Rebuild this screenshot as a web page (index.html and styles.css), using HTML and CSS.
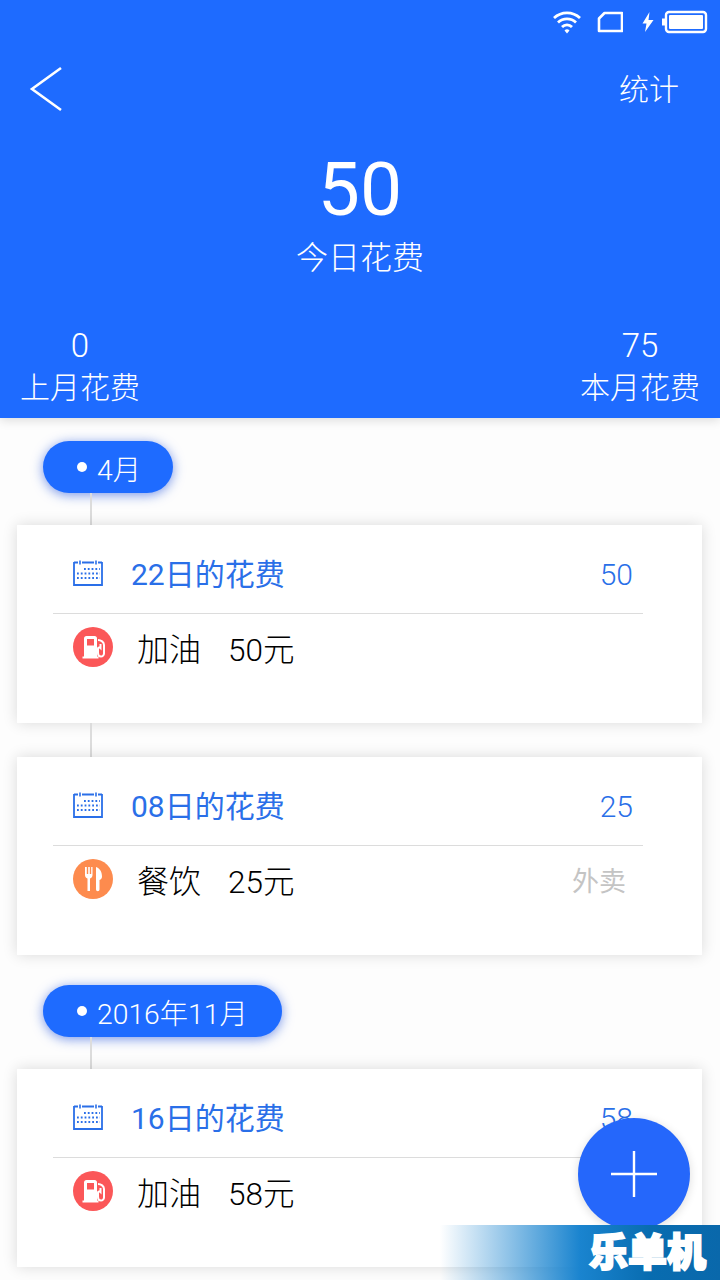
FILE: index.html
```html
<!DOCTYPE html>
<html lang="zh-CN">
  <head>
    <meta charset="UTF-8" />
    <meta name="viewport" content="width=device-width, initial-scale=1.0" />
    <title>今日花费</title>
    <link rel="stylesheet" href="styles.css">
  </head>
  <body>
    <svg class="defs" width="0" height="0">
      <defs>
        <symbol id="calendar" viewBox="0 0 30 26">
          <path d="M1 2.500h4M9 2.500h12M25 2.500h4M1 2v23h28V2" fill="none" stroke="currentColor" stroke-width="1.800" />
          <path d="M7 0.500v4M23 0.500v4" stroke="currentColor" stroke-width="1.600" />
          <path d="M11 9h16M4 13.500h23M4 18h23" stroke="currentColor" stroke-width="1.800" stroke-dasharray="1.800 2" />
        </symbol>
        <symbol id="fuel" viewBox="0 0 40 40">
          <circle cx="20" cy="20" r="20" fill="#fb5758" />
          <path d="M11 30V11.500A2.500 2.500 0 0 1 13.500 9h8A2.500 2.500 0 0 1 24 11.500V30z" fill="#fff" />
          <path d="M14 12h7v6.500h-7z" fill="#fb5758" />
          <path d="M9.500 30.500h16" stroke="#fff" stroke-width="2" />
          <path d="M25 13c3 0 6 2 6 5v8.500a3 3 0 0 1-3 3c-2 0-3-1.500-3-3.500v-4.500c0-1.500 2-1 2.500-.5V17" fill="none" stroke="#fff" stroke-width="2" />
        </symbol>
        <symbol id="food" viewBox="0 0 40 40">
          <circle cx="20" cy="20" r="20" fill="#fd8b4e" />
          <path d="M12 8v8c0 2 1 3 2.500 3.500V32H17V19.500c1.500-.5 2.500-1.500 2.500-3.500V8h-1.300v7h-1.400V8h-1.600v7h-1.400V8z" fill="#fff" />
          <path d="M23 8c3.500 1 6 4.500 6 9.500 0 2-1 3-2.500 3.500v9.500a1.700 1.700 0 0 1-3.500 0z" fill="#fff" />
        </symbol>
      </defs>
    </svg>

    <header class="top">
      <div class="status-bar">
        <svg class="ic-wifi" width="30" height="26" viewBox="0 0 30 26">
          <path d="M2 9a19 19 0 0 1 26 0M6 13.500a13 13 0 0 1 18 0M10 18a7 7 0 0 1 10 0" fill="none" stroke="#fff" stroke-width="2.800" />
          <path d="M12.500 21.500a3.500 3.500 0 0 1 5 0L15 24.500z" fill="#fff" />
        </svg>
        <svg class="ic-sim" width="26" height="22" viewBox="0 0 26 22">
          <path d="M7.500 2H25v18H2V7.500z" fill="none" stroke="#fff" stroke-width="2.600" stroke-linejoin="round" />
        </svg>
        <svg class="ic-bolt" width="14" height="22" viewBox="0 0 14 22">
          <path d="M8.500 1L1.500 12.500h4L4 21 12.500 9H7.500z" fill="#fff" />
        </svg>
        <svg class="ic-battery" width="46" height="24" viewBox="0 0 46 24">
          <path d="M0 8.500h3v7H0z" fill="#fff" />
          <rect x="4" y="2" width="40" height="20" rx="3" fill="none" stroke="#fff" stroke-width="2.400" />
          <rect x="7" y="5" width="34" height="14" rx="1" fill="#fff" />
        </svg>
      </div>
      <div class="nav">
        <svg class="back" width="34" height="46" viewBox="0 0 34 46">
          <path d="M32 2L3 23l29 21" fill="none" stroke="#fff" stroke-width="2.600" />
        </svg>
        <span class="nav-link">统计</span>
      </div>
      <div class="today">
        <div class="today-num">50</div>
        <div class="today-label">今日花费</div>
      </div>
      <div class="totals">
        <div class="total">
          <div class="total-num">0</div>
          <div class="total-label">上月花费</div>
        </div>
        <div class="total">
          <div class="total-num">75</div>
          <div class="total-label">本月花费</div>
        </div>
      </div>
    </header>

    <main class="timeline">
      <div class="pill pill-short"><i class="dot"></i>4月</div>
      <div class="line"></div>
      <section class="card">
        <div class="card-head">
          <svg class="cal" width="30" height="26"><use href="#calendar" /></svg>
          <span class="card-title">22日的花费</span>
          <span class="card-sum">50</span>
        </div>
        <div class="item">
          <svg class="item-icon" width="40" height="40"><use href="#fuel" /></svg>
          <span class="item-name">加油</span>
          <span class="item-cost">50元</span>
        </div>
      </section>
      <div class="line line-tall"></div>
      <section class="card">
        <div class="card-head">
          <svg class="cal" width="30" height="26"><use href="#calendar" /></svg>
          <span class="card-title">08日的花费</span>
          <span class="card-sum">25</span>
        </div>
        <div class="item">
          <svg class="item-icon" width="40" height="40"><use href="#food" /></svg>
          <span class="item-name">餐饮</span>
          <span class="item-cost">25元</span>
          <span class="item-note">外卖</span>
        </div>
      </section>
      <div class="pill pill-gap"><i class="dot"></i>2016年11月</div>
      <div class="line"></div>
      <section class="card">
        <div class="card-head">
          <svg class="cal" width="30" height="26"><use href="#calendar" /></svg>
          <span class="card-title">16日的花费</span>
          <span class="card-sum">58</span>
        </div>
        <div class="item">
          <svg class="item-icon" width="40" height="40"><use href="#fuel" /></svg>
          <span class="item-name">加油</span>
          <span class="item-cost">58元</span>
        </div>
      </section>
    </main>

    <button class="fab" type="button">
      <svg width="46" height="46" viewBox="0 0 46 46">
        <path d="M23 0v46M0 23h46" stroke="#fff" stroke-width="2.400" />
      </svg>
    </button>
    <div class="watermark"><span>乐单机</span></div>
  </body>
</html>
```

FILE: styles.css
```css
:root {
  --blue: #1e6bff;
  --title-blue: #2a6fe8;
}

html {
  box-sizing: border-box;
  font-size: 16px;
}

*,
*::before,
::after {
  box-sizing: border-box;
}

body {
  position: relative;
  margin: 0;
  width: 720px;
  height: 1280px;
  overflow: hidden;
  background-color: #fdfdfd;
  font-family: Roboto, "Noto Sans CJK SC", sans-serif;
}

.defs {
  position: absolute;
}

.top {
  display: flex;
  flex-direction: column;
  height: 418px;
  background-color: var(--blue);
  color: #fff;
  box-shadow: 0 2px 10px rgba(0, 0, 0, 0.14);
}

.status-bar {
  display: flex;
  justify-content: flex-end;
  align-items: center;
  height: 44px;
  padding-right: 12px;
}

.ic-sim {
  margin-left: 15px;
}

.ic-bolt {
  margin-left: 18px;
}

.ic-battery {
  margin-left: 7px;
}

.nav {
  display: flex;
  justify-content: space-between;
  align-items: center;
  height: 90px;
  padding: 0 41px 0 29px;
}

.nav-link {
  margin-top: -4px;
  font-size: 30px;
  font-weight: 300;
}

.today {
  margin-top: 13px;
  text-align: center;
}

.today-num {
  font-size: 75px;
  line-height: 84px;
}

.today-label {
  margin-top: 5px;
  font-size: 32px;
  font-weight: 300;
  line-height: 44px;
}

.totals {
  display: flex;
  justify-content: space-between;
  margin-top: 46px;
  padding: 0 20px;
}

.total {
  text-align: center;
}

.total-num {
  font-size: 33px;
  font-weight: 300;
  line-height: 40px;
}

.total-label {
  font-size: 30px;
  font-weight: 300;
  line-height: 44px;
}

.timeline {
  display: flex;
  flex-direction: column;
  padding: 23px 18px 0 17px;
}

.pill {
  display: flex;
  align-items: center;
  align-self: flex-start;
  height: 52px;
  margin-left: 26px;
  padding: 0 34px;
  border-radius: 26px;
  background-color: var(--blue);
  box-shadow: 0 2px 12px rgba(30, 80, 220, 0.6);
  color: #fff;
  font-size: 28.300px;
  font-weight: 300;
}

.pill-short {
  padding-right: 32px;
}

.pill-gap {
  margin-top: 30px;
}

.dot {
  width: 10px;
  height: 10px;
  margin-right: 10px;
  border-radius: 50%;
  background-color: #fff;
}

.line {
  width: 2px;
  height: 32px;
  margin-left: 73px;
  background-color: #dcdcdc;
}

.line-tall {
  height: 34px;
}

.card {
  height: 198px;
  padding: 0 59px 0 36px;
  background-color: #fff;
  box-shadow: 0 0 14px rgba(0, 0, 0, 0.14);
}

.card-head {
  display: flex;
  align-items: center;
  height: 89px;
  padding: 8px 10px 0 20px;
  border-bottom: 1px solid #dcdcdc;
  color: var(--title-blue);
}

.cal {
  color: var(--title-blue);
}

.card-title {
  margin-left: 28px;
  margin-top: -2px;
  font-size: 30px;
}

.card-sum {
  margin-left: auto;
  margin-top: 2px;
  font-size: 30px;
  font-weight: 300;
}

.item {
  display: flex;
  align-items: center;
  height: 66px;
  padding: 0 17px 0 20px;
  color: #000;
}

.item-name {
  margin-left: 24px;
  font-size: 32px;
  font-weight: 300;
}

.item-cost {
  margin-left: 27px;
  font-size: 31.500px;
  font-weight: 300;
}

.item-note {
  margin-left: auto;
  color: #c4c4c4;
  font-size: 27px;
}

.fab {
  position: absolute;
  left: 578px;
  top: 1118px;
  display: flex;
  align-items: center;
  justify-content: center;
  width: 112px;
  height: 112px;
  padding: 0;
  border: 0;
  border-radius: 50%;
  background-color: #2567fb;
  box-shadow: 0 2px 10px rgba(0, 0, 0, 0.14);
}

.watermark {
  position: absolute;
  left: 440px;
  top: 1225px;
  width: 280px;
  height: 55px;
  padding-left: 149px;
  background: linear-gradient(90deg, rgba(10, 115, 190, 0), #1a84cf 50%, #086cb0 75%, #0a68ab);
  color: #fff;
  font-size: 39px;
  font-weight: 900;
  line-height: 57px;
  -webkit-text-stroke: 2px #fff;
}
```
